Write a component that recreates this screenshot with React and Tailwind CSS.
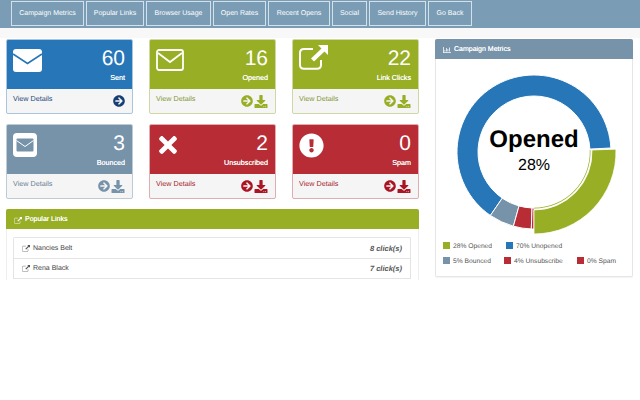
import React from "react";
import {
  FaArrowCircleRight,
  FaDownload,
  FaTimes,
  FaExclamationCircle,
  FaRegChartBar,
} from "react-icons/fa";

const tabs = [
  ["Campaign Metrics", "w-[73px]"],
  ["Popular Links", "w-[58px]"],
  ["Browser Usage", "w-[65px]"],
  ["Open Rates", "w-[53px]"],
  ["Recent Opens", "w-[62px]"],
  ["Social", "w-[35px]"],
  ["Send History", "w-[57px]"],
  ["Go Back", "w-[44px]"],
];

const EnvelopeFilled = () => (
  <svg viewBox="0 0 29 23" className="w-[29px] h-[23px] mt-[1px]">
    <rect width="29" height="23" rx="3" fill="#fff" />
    <path d="M0 5 L14.5 14.5 L29 5" fill="none" stroke="#2776b8" strokeWidth="1.6" />
  </svg>
);

const EnvelopeOutline = () => (
  <svg viewBox="0 0 28 22" className="w-[28px] h-[22px] mt-[1px]">
    <rect x="1" y="1" width="26" height="20" rx="2" fill="none" stroke="#fff" strokeWidth="1.8" />
    <path d="M2 4 L14 13 L26 4" fill="none" stroke="#fff" strokeWidth="1.8" />
  </svg>
);

const EnvelopeSquare = () => (
  <svg viewBox="0 0 24 24" className="w-[24px] h-[24px]">
    <rect width="24" height="24" rx="4" fill="#fff" />
    <rect x="3.5" y="5.5" width="17" height="13" rx="1" fill="#7793aa" />
    <path d="M3.5 7.5 L12 13.5 L20.5 7.5" fill="none" stroke="#fff" strokeWidth="1" />
  </svg>
);

const LinkIcon = ({ className, color = "#fff", width = 2 }) => (
  <svg viewBox="0 0 29 25" className={className}>
    <path
      d="M22 15 V20 Q22 23.8 18 23.8 H5 Q1 23.8 1 20 V8 Q1 4 5 4 H14"
      fill="none"
      stroke={color}
      strokeWidth={width}
    />
    <path d="M19 0 H29 V10 L25.5 6.5 L15 16.5 L12 13.5 L22.5 3.5 Z" fill={color} />
  </svg>
);

const cards = [
  { label: "Sent", value: 60, bg: "bg-[#2776b8]", border: "border-[#a9c6de]", text: "text-[#1d4a7c]", arrow: "text-[#163f75]", icon: <EnvelopeFilled />, plain: true },
  { label: "Opened", value: 16, bg: "bg-[#97ae25]", border: "border-[#cfd8a5]", text: "text-[#84983a]", arrow: "text-[#97ae25]", icon: <EnvelopeOutline /> },
  { label: "Link Clicks", value: 22, bg: "bg-[#97ae25]", border: "border-[#cfd8a5]", text: "text-[#84983a]", arrow: "text-[#97ae25]", icon: <LinkIcon className="w-[29px] h-[25px] -mt-[3px]" /> },
  { label: "Bounced", value: 3, bg: "bg-[#7793aa]", border: "border-[#bccbd6]", text: "text-[#6a8296]", arrow: "text-[#7793aa]", icon: <EnvelopeSquare /> },
  { label: "Unsubscribed", value: 2, bg: "bg-[#b72c35]", border: "border-[#e0aeb2]", text: "text-[#a81f2e]", arrow: "text-[#ab1523]", icon: <FaTimes className="text-white w-[22px] h-[26px] -mt-[1px] ml-[1px]" /> },
  { label: "Spam", value: 0, bg: "bg-[#b72c35]", border: "border-[#e0aeb2]", text: "text-[#a81f2e]", arrow: "text-[#ab1523]", icon: <FaExclamationCircle className="text-white w-[25px] h-[25px]" /> },
];

const StatCard = ({ card }) => (
  <div className={`border ${card.border} rounded-[2px] h-[75px] flex flex-col overflow-hidden bg-[#f5f5f5]`}>
    <div className={`${card.bg} h-[49px] flex justify-between pl-[6px] pr-[7px] pt-[8px] text-white`}>
      <div>{card.icon}</div>
      <div className="text-right">
        <div className="text-[21px] leading-[24px] -mt-[1px]">{card.value}</div>
        <div className="text-[7.2px] leading-[9px] mt-[2px] [text-shadow:0_0_0.6px_#fff]">{card.label}</div>
      </div>
    </div>
    <div className="flex-1 flex items-center justify-between pl-[6px] pr-[7px]">
      <span className={`text-[7.2px] -mt-[3px] ${card.text}`}>View Details</span>
      <span className="flex items-center gap-[1px]">
        <FaArrowCircleRight className={`w-[12px] h-[12px] ${card.arrow}`} />
        {!card.plain && <FaDownload className={`w-[14px] h-[13px] ${card.arrow}`} />}
      </span>
    </div>
  </div>
);

// chart geometry, in page pixels relative to the svg box
const CX = 100;
const CY = 80;

const arc = (from, to, outer, inner) => {
  const pt = (deg, r) => {
    const a = ((deg - 90) * Math.PI) / 180;
    return `${(CX + r * Math.cos(a)).toFixed(2)} ${(CY + r * Math.sin(a)).toFixed(2)}`;
  };
  const large = to - from > 180 ? 1 : 0;
  return `M${pt(from, outer)} A${outer} ${outer} 0 ${large} 1 ${pt(to, outer)} L${pt(to, inner)} A${inner} ${inner} 0 ${large} 0 ${pt(from, inner)} Z`;
};

const slices = [
  { from: 214.5, to: 447, fill: "#2776b8" },
  { from: 195.5, to: 214.5, fill: "#7793aa" },
  { from: 182, to: 195.5, fill: "#b72c35" },
  { from: 180, to: 182, fill: "#b72c35" },
];

const legend = [
  [
    ["28% Opened", "bg-[#97ae25]", "w-[63px]"],
    ["70% Unopened", "bg-[#2776b8]", ""],
  ],
  [
    ["5% Bounced", "bg-[#7793aa]", "w-[61px]"],
    ["4% Unsubscribe", "bg-[#b72c35]", "w-[73px]"],
    ["0% Spam", "bg-[#b72c35]", ""],
  ],
];

const links = [
  ["Nancies Belt", "8 click(s)"],
  ["Rena Black", "7 click(s)"],
];

export default function App() {
  return (
    <div className="bg-white h-[400px] font-['Liberation_Sans',Arial,sans-serif] [text-rendering:geometricPrecision]">
      <div className="h-[280px] overflow-hidden">
        <nav className="h-[28px] bg-[#7a9cb5] flex gap-[2px] pl-[11px] pt-[1px]">
          {tabs.map(([name, w]) => (
            <div
              key={name}
              className={`${w} h-[25px] border border-[#d3e1ea] flex items-center justify-center pt-[1px] text-white text-[7px] whitespace-nowrap`}
            >
              {name}
            </div>
          ))}
        </nav>
        <div className="h-[10px] bg-[#f8f8f8]" />
        <main className="flex pl-[6px] gap-[16px] pt-[1px]">
          <div className="w-[413px]">
            <div className="grid grid-cols-[127px_127px_127px] gap-x-[16px] gap-y-[10px]">
              {cards.map((card) => (
                <StatCard key={card.label} card={card} />
              ))}
            </div>
            <section className="mt-[10px] border-x border-[#eeeeee] rounded-t-[2px] h-[80px]">
              <div className="bg-[#97ae25] h-[20px] -mx-px flex items-center gap-[3px] pl-[8px] pt-[2px] text-white text-[7px] rounded-t-[2px] [text-shadow:0_0_0.6px_#fff]">
                <LinkIcon className="w-[8px] h-[7px]" width={2} />
                Popular Links
              </div>
              <div className="ml-[6px] mr-[7px] mt-[8px] border-x border-t border-[#e4e4e4] rounded-t-[2px]">
                {links.map(([name, clicks]) => (
                  <div
                    key={name}
                    className="h-[20.5px] border-b border-[#e4e4e4] flex items-center justify-between pl-[8px] pr-[8px] pt-[1px] text-[#444]"
                  >
                    <span className="flex items-center gap-[3px] text-[7px]">
                      <LinkIcon className="w-[8px] h-[7px]" color="#555" width={1.6} />
                      <span className="mt-[1px]">{name}</span>
                    </span>
                    <span className="text-[7.5px] italic font-bold text-[#555]">{clicks}</span>
                  </div>
                ))}
              </div>
            </section>
          </div>

          <aside className="w-[198px] h-[238px] border-x border-b border-[#e6e6e6] rounded-[2px] shadow-[0_1px_1px_rgba(0,0,0,0.05)]">
            <div className="bg-[#7793aa] h-[20px] -mx-px flex items-center gap-[3px] pl-[8px] pt-[2px] text-white text-[7px] rounded-t-[2px] [text-shadow:0_0_0.6px_#fff]">
              <FaRegChartBar className="w-[8px] h-[8px]" />
              Campaign Metrics
            </div>
            <svg width="198" height="177" className="block mb-[6px]" viewBox="2 -13 198 177">
              {slices.map((s) => (
                <path key={s.from} d={arc(s.from, s.to, 77, 56)} fill={s.fill} stroke="#fff" strokeWidth="1" />
              ))}
              <path d={arc(88, 180, 82, 58)} fill="#97ae25" stroke="#fff" strokeWidth="0.8" />
              <path d={arc(88, 180, 56.5, 55.8)} fill="#97ae25" />
              <text x="100" y="75" textAnchor="middle" fontSize="24" fontWeight="700" fill="#000">
                Opened
              </text>
              <text x="100" y="98" textAnchor="middle" fontSize="16" fill="#000">
                28%
              </text>
            </svg>
            <div className="pl-[7px] flex flex-col gap-[8px]">
              {legend.map((row, i) => (
                <div key={i} className="flex h-[7px] items-center">
                  {row.map(([label, color, w]) => (
                    <div key={label} className={`flex items-center gap-[3px] ${w}`}>
                      <span className={`w-[7px] h-[7px] ${color}`} />
                      <span className="text-[6.7px] leading-[7px] mt-[1px] text-[#555] whitespace-nowrap">{label}</span>
                    </div>
                  ))}
                </div>
              ))}
            </div>
          </aside>
        </main>
      </div>
    </div>
  );
}
